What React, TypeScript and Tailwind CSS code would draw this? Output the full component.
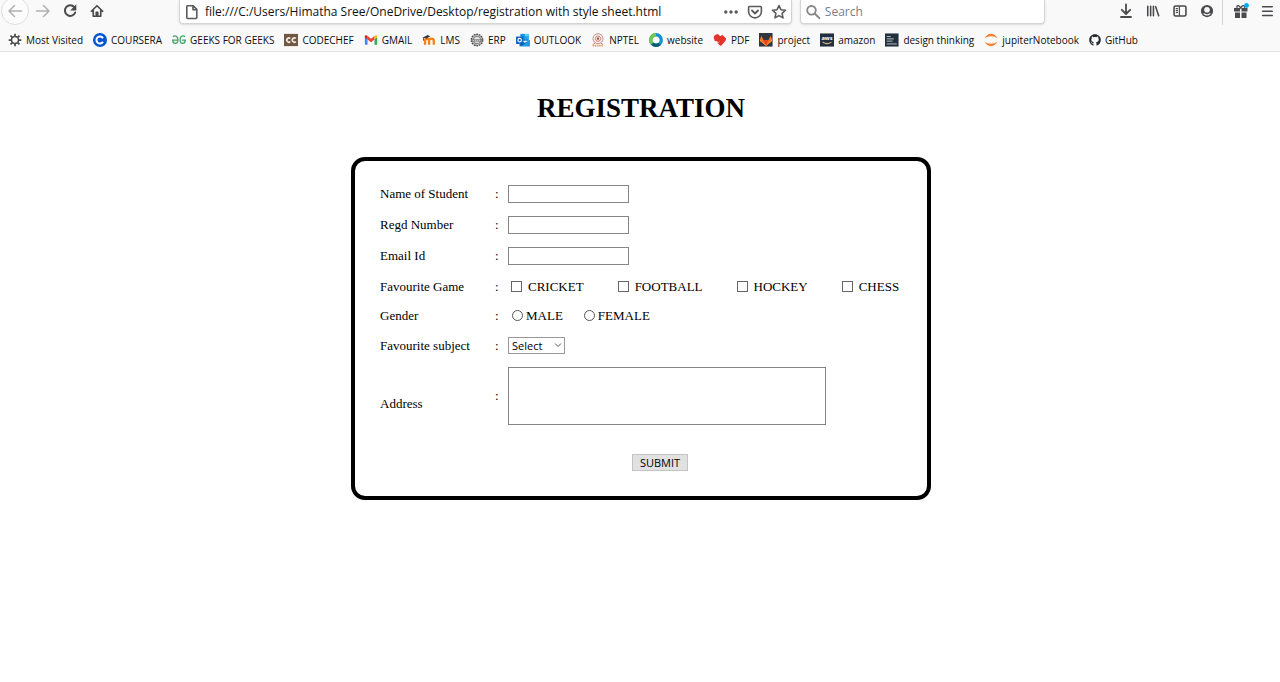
import type { ReactNode } from "react";
import { FaGithub } from "react-icons/fa";

const line = {
  fill: "none",
  stroke: "currentColor",
  strokeWidth: 1.8,
  strokeLinecap: "round" as const,
  strokeLinejoin: "round" as const,
};

function Glyph({ children, size = "size-4" }: { children: ReactNode; size?: string }) {
  return (
    <svg viewBox="0 0 16 16" className={`${size} shrink-0`} aria-hidden="true">
      {children}
    </svg>
  );
}

function ToolButton({ label, className = "w-[27px]", children }: { label: string; className?: string; children: ReactNode }) {
  return (
    <button type="button" aria-label={label} className={`flex shrink-0 items-center justify-center ${className}`}>
      {children}
    </button>
  );
}

function NavButtons() {
  return (
    <div className="flex w-[179px] shrink-0 items-center pl-px text-[#4a4a4c]">
      <button
        type="button"
        aria-label="Back"
        className="flex size-7 shrink-0 items-center justify-center rounded-full border border-[#dededf] bg-[#fcfcfc] text-[#b0b0b2]"
      >
        <Glyph>
          <path {...line} strokeWidth={1.5} d="M14.5 8H2M7.5 2.5 2 8l5.500 5.500" />
        </Glyph>
      </button>
      <ToolButton label="Forward" className="w-[27px] text-[#b0b0b2]">
        <Glyph>
          <path {...line} strokeWidth={1.5} d="M1.500 8H14M8.500 2.500 14 8l-5.500 5.500" />
        </Glyph>
      </ToolButton>
      <ToolButton label="Reload">
        <Glyph>
          <path {...line} strokeWidth={2} d="M12.300 4.200A5.300 5.300 0 1 0 13.200 9.500" />
          <path fill="currentColor" d="M14.300 1.200v5.600a.6.6 0 0 1-.6.6H8.200z" />
        </Glyph>
      </ToolButton>
      <ToolButton label="Home">
        <Glyph size="size-3.5">
          <path {...line} strokeWidth={1.900} d="M1.500 8.300 8 2l6.500 6.300M3.700 7.500V14h8.600V7.500" />
          <path fill="currentColor" d="M6.200 14V9.600a1 1 0 0 1 1-1h1.600a1 1 0 0 1 1 1V14z" />
        </Glyph>
      </ToolButton>
    </div>
  );
}

function AddressBar() {
  return (
    <div className="flex h-6 min-w-0 items-center gap-[5px] rounded-b-sm border border-t-0 border-[#d4d4d6] bg-white px-1 text-[#5a5a5c] shadow-sm">
      <Glyph>
        <path {...line} strokeWidth={1.600} d="M3.500 1.800h5.700l3.600 3.600v8.200a.9.9 0 0 1-.9.900H3.700a.9.900 0 0 1-.9-.9V2.600a.8.8 0 0 1 .7-.8zM9 2v3.700h3.700" />
      </Glyph>
      <input
        type="text"
        aria-label="Address"
        defaultValue="file:///C:/Users/Himatha Sree/OneDrive/Desktop/registration with style sheet.html"
        className="min-w-0 flex-1 bg-transparent text-xs text-[#111] outline-none"
      />
      <div className="flex shrink-0 items-center gap-2">
        <button type="button" aria-label="Page actions">
          <Glyph>
            <circle cx="2.800" cy="8" r="1.700" fill="currentColor" />
            <circle cx="8" cy="8" r="1.700" fill="currentColor" />
            <circle cx="13.200" cy="8" r="1.700" fill="currentColor" />
          </Glyph>
        </button>
        <button type="button" aria-label="Save to Pocket">
          <Glyph>
            <path {...line} strokeWidth={1.600} d="M2.600 2.500h10.800a1 1 0 0 1 1 1v4a6.400 6.400 0 0 1-12.800 0v-4a1 1 0 0 1 1-1z" />
            <path {...line} d="M5 6.500l3 3 3-3" />
          </Glyph>
        </button>
        <button type="button" aria-label="Bookmark this page">
          <Glyph>
            <path {...line} strokeWidth={1.600} d="M8 1.500l1.900 4.200 4.600.5-3.400 3.100.9 4.600L8 11.600l-4 2.300.9-4.600L1.500 6.200l4.600-.5z" />
          </Glyph>
        </button>
      </div>
    </div>
  );
}

function SearchBar() {
  return (
    <div className="flex h-6 min-w-0 items-center gap-1 rounded-b-sm border border-t-0 border-[#d4d4d6] bg-white px-1 text-[#858588] shadow-sm">
      <Glyph>
        <circle {...line} cx="6.500" cy="6.300" r="4.300" />
        <path {...line} strokeWidth={2} d="M9.800 9.600l4.500 4.500" />
      </Glyph>
      <input
        type="search"
        aria-label="Search"
        placeholder="Search"
        className="min-w-0 flex-1 bg-transparent text-xs outline-none placeholder:text-[#7a7d8c]"
      />
    </div>
  );
}

function Tools() {
  return (
    <div className="flex w-[235px] shrink-0 items-center justify-end text-[#4a4a4c]">
      <ToolButton label="Downloads">
        <Glyph>
          <path {...line} d="M8 1.500v9M3.800 6.800 8 11l4.200-4.200M3 14h10" />
        </Glyph>
      </ToolButton>
      <ToolButton label="Library">
        <Glyph size="size-3.5">
          <path {...line} d="M2 2.500v11M5.300 2.500v11M8.500 2.500v11M11 3l3.500 10.500" />
        </Glyph>
      </ToolButton>
      <ToolButton label="Sidebars">
        <Glyph size="size-3.5">
          <rect {...line} x="1.200" y="2.200" width="13.600" height="11.600" rx="1.800" />
          <path {...line} strokeWidth={1.300} d="M7.300 3v10M3.700 5.300h1.500M3.700 7.500h1.500M3.700 9.700h1.500" />
        </Glyph>
      </ToolButton>
      <ToolButton label="Account">
        <Glyph size="size-3.5">
          <circle cx="8" cy="8" r="7" fill="currentColor" />
          <circle cx="8" cy="6.600" r="3.200" fill="#f9f9fa" />
          <path d="M4.200 10.800q3.800 3.200 7.600 0" fill="none" stroke="#f9f9fa" strokeWidth="1.300" />
        </Glyph>
      </ToolButton>
      <ToolButton label="What's new" className="ml-0.5 h-7 w-[31px] border-l border-[#d4d4d6] pl-1.5">
        <Glyph>
          <path fill="currentColor" d="M1 5h6v3.500H1zM8.500 5h6v3.500h-6zM2 9.500h5V15H2zM8.500 9.500h5V15h-5z" />
          <path {...line} strokeWidth={1.400} d="M7.500 5C6.500 1.800 3.500 2 4 4.300M8 5c.8-3 3.500-3 3.500-.8" />
          <circle cx="13.500" cy="2.500" r="2.400" fill="#00a8f5" />
        </Glyph>
      </ToolButton>
      <ToolButton label="Menu">
        <Glyph size="size-3.5">
          <path {...line} d="M3 3.200h11M3 8.200h11M3 13.200h11" />
        </Glyph>
      </ToolButton>
    </div>
  );
}

const bookmarks: { name: string; icon: ReactNode }[] = [
  {
    name: "Most Visited",
    icon: (
      <Glyph size="size-3.5">
        <circle cx="8" cy="8" r="4" fill="none" stroke="#4a4a4c" strokeWidth="1.800" />
        <path
          stroke="#4a4a4c"
          strokeWidth="2"
          d="M8 .8v3M8 12.200v3M.8 8h3M12.200 8h3M2.900 2.900 5 5M11 11l2.100 2.100M13.100 2.900 11 5M5 11l-2.100 2.100"
        />
      </Glyph>
    ),
  },
  {
    name: "COURSERA",
    icon: (
      <Glyph size="size-3.5">
        <circle cx="8" cy="8" r="8" fill="#0056d2" />
        <path d="M11.400 6A4 4 0 1 0 11.400 10" fill="none" stroke="#fff" strokeWidth="2.300" />
      </Glyph>
    ),
  },
  {
    name: "GEEKS FOR GEEKS",
    icon: (
      <Glyph size="size-3.5">
        <path
          d="M1.200 4.500C2.800 2.300 6.800 3 6.800 7.800c0 5.500-5.600 5.300-6 .4h6M14.800 4.500C13.200 2.300 9.200 3 9.200 7.800c0 5.500 5.600 5.300 6 .4h-4"
          fill="none"
          stroke="#3fa56a"
          strokeWidth="1.500"
        />
      </Glyph>
    ),
  },
  {
    name: "CODECHEF",
    icon: (
      <Glyph size="size-3.5">
        <path fill="#705844" d="M0 1h16v14H0z" />
        <path d="M7.200 6.300A2.400 2.400 0 1 0 7.200 9.900M13.500 6.300A2.400 2.400 0 1 0 13.500 9.900" fill="none" stroke="#f3ece4" strokeWidth="1.800" />
      </Glyph>
    ),
  },
  {
    name: "GMAIL",
    icon: (
      <Glyph size="size-3.5">
        <path fill="#4285f4" d="M1 4.500 4 7v6.500H2a1 1 0 0 1-1-1z" />
        <path fill="#34a853" d="M12 7l3-2.500v8a1 1 0 0 1-1 1h-2z" />
        <path fill="#ea4335" d="M4 3.500l4 3.200 4-3.200V7.300L8 10.500 4 7.300z" />
        <path fill="#c5221f" d="M1 4c0-1.500 1.700-2 3-.5v3.800L1 5z" />
        <path fill="#fbbc04" d="M15 4c0-1.500-1.700-2-3-.5v3.800L15 5z" />
      </Glyph>
    ),
  },
  {
    name: "LMS",
    icon: (
      <Glyph size="size-3.5">
        <path d="M3.500 13.500V9a2.300 2.300 0 0 1 4.600 0v4.500M8.100 9a2.700 2.700 0 0 1 5.400 0v4.500" fill="none" stroke="#f98012" strokeWidth="2.600" />
        <path fill="#3a3a3c" d="M.5 5.500 6.500 2.300l3 1.300-4 2.600z" />
        <path d="M1.800 5.500v3.300" stroke="#3a3a3c" strokeWidth="1" />
      </Glyph>
    ),
  },
  {
    name: "ERP",
    icon: (
      <Glyph size="size-3.5">
        <circle cx="8" cy="8" r="6.500" fill="#c9c9c9" stroke="#4a4a4a" strokeWidth="1.600" strokeDasharray="2 .9" />
        <circle cx="8" cy="8" r="4.300" fill="#e5e5e5" stroke="#666" strokeWidth="1" />
        <path fill="#777" d="M1.500 7.200h13v2.600h-13z" />
        <path stroke="#ddd" strokeWidth="1" d="M3 8.500h10" strokeDasharray="1.500 .8" />
      </Glyph>
    ),
  },
  {
    name: "OUTLOOK",
    icon: (
      <Glyph size="size-3.5">
        <path fill="#1490df" d="M5 1h9.500v8H5z" />
        <path fill="#28a8ea" d="M10 3.500h4.500V7H10z" />
        <path fill="#50d9ff" d="M10 1h4.500v2.500H10z" />
        <path fill="#0a64b4" d="M4 8l6 3 6-3v6.200a1 1 0 0 1-1 1H5a1 1 0 0 1-1-1z" />
        <path fill="#1e9de7" d="M16 8v6.200a1 1 0 0 1-1 1H6z" />
        <rect x="0" y="4" width="8.500" height="8.500" rx=".8" fill="#0a66c2" />
        <circle cx="4.200" cy="8.200" r="2" fill="none" stroke="#fff" strokeWidth="1.300" />
      </Glyph>
    ),
  },
  {
    name: "NPTEL",
    icon: (
      <Glyph size="size-3.5">
        <circle cx="8" cy="6.500" r="5.700" fill="#fbeeea" stroke="#c08d86" strokeWidth="1.100" />
        <circle cx="8" cy="6.500" r="3" fill="none" stroke="#d17a70" strokeWidth="1.100" />
        <circle cx="8" cy="6.500" r="1.300" fill="#a83a35" />
        <path d="M4.500 11.500l-2.500 2M11.500 11.500l2.500 2" stroke="#b5625a" strokeWidth="1" />
        <path d="M2 14.500h12" stroke="#f0a04b" strokeWidth="2" strokeDasharray="1.800 .6" />
      </Glyph>
    ),
  },
  {
    name: "website",
    icon: (
      <Glyph size="size-3.5">
        <circle cx="8" cy="8" r="6" fill="#fff" stroke="#1593c9" strokeWidth="3.800" />
        <path d="M8 2a6 6 0 0 0-4.200 10.200" fill="none" stroke="#71c64b" strokeWidth="3.800" />
        <path d="M3.800 12.200A6 6 0 0 0 12 12.500" fill="none" stroke="#0b5870" strokeWidth="3.800" />
      </Glyph>
    ),
  },
  {
    name: "PDF",
    icon: (
      <Glyph size="size-3.5">
        <path fill="#e5322d" d="M.8 5.500A4 4 0 0 1 6 1.500l2.300 2.100L10.500 2 15 6.300l-.8 2.900L9 14.800 5.500 12l-.5-2.500-3-.5z" />
        <path d="M5.200 11.500l2-1.300" stroke="#fbe3e2" strokeWidth=".8" />
      </Glyph>
    ),
  },
  {
    name: "project",
    icon: (
      <Glyph size="size-3.5">
        <path fill="#30353e" d="M0 0h15.500v15.500H0z" />
        <path fill="#fca326" d="M1 9l1.500-5.500L5 8h6l2.500-4.500L15 9l-7 5.800z" />
        <path fill="#fc6d26" d="M2.500 3.500 5 8l3 6.800L1.700 8zM13.500 3.500 11 8l-3 6.800L14.300 8z" />
        <path fill="#e24329" d="M5 8h6l-3 6.800z" />
      </Glyph>
    ),
  },
  {
    name: "amazon",
    icon: (
      <Glyph size="size-3.5">
        <path fill="#232f3e" d="M0 .5h16v15H0z" />
        <text x="8" y="8.500" textAnchor="middle" fontSize="6.500" fontWeight="700" fontFamily="Open Sans, sans-serif" fill="#fff">
          aws
        </text>
        <path d="M3 10.300c3 2.200 7 2.200 10 .2" fill="none" stroke="#d9b07a" strokeWidth="1.200" />
      </Glyph>
    ),
  },
  {
    name: "design thinking",
    icon: (
      <Glyph size="size-3.5">
        <path fill="#22303d" d="M0 .5h15.500v15H0z" />
        <path d="M2 4h4.500M2 6.700h8M2 9.300h6.500M2 12.500h11.500" stroke="#b9c1c8" strokeWidth="1.100" />
      </Glyph>
    ),
  },
  {
    name: "jupiterNotebook",
    icon: (
      <Glyph size="size-3.5">
        <path fill="#f58231" d="M.8 6.200C3.300-.8 12.700-.8 15.200 6.200 11.800 2.800 4.200 2.800.8 6.200zM.8 9.800c2.500 7 11.900 7 14.400 0-3.400 3.400-11 3.400-14.400 0z" />
      </Glyph>
    ),
  },
  { name: "GitHub", icon: <FaGithub className="size-3 shrink-0 text-[#24292e]" aria-hidden="true" /> },
];

const games = ["CRICKET", "FOOTBALL", "HOCKEY", "CHESS"];

function Row({ label, htmlFor, height = "h-[31px]", children }: { label: string; htmlFor?: string; height?: string; children: ReactNode }) {
  return (
    <div className={`flex items-center ${height}`}>
      {htmlFor ? (
        <label htmlFor={htmlFor} className="w-[115px] shrink-0">
          {label}
        </label>
      ) : (
        <span className="w-[115px] shrink-0">{label}</span>
      )}
      <span className="w-[13px] shrink-0">:</span>
      {children}
    </div>
  );
}

const textField = "h-[18px] w-[121px] border border-[#858585] bg-white px-1 text-xs";

export default function App() {
  return (
    <div className="min-h-screen bg-white font-['Open_Sans','Noto_Sans',sans-serif] text-black">
      <header className="border-b border-[#e3e3e5] bg-[#f9f9fa]">
        <div className="flex h-6 items-start">
          <div className="flex h-[22px] items-center">
            <NavButtons />
          </div>
          <div className="grid min-w-0 flex-1 grid-cols-[5fr_2fr] gap-2">
            <AddressBar />
            <SearchBar />
          </div>
          <div className="flex h-[22px] items-center">
            <Tools />
          </div>
        </div>
        <nav
          aria-label="Bookmarks"
          className="flex h-[27px] items-center gap-2.5 overflow-hidden pt-1 pl-2 text-[10px] leading-4 whitespace-nowrap"
        >
          {bookmarks.map(({ name, icon }) => (
            <a key={name} href="#" className="flex items-center gap-1 text-[#0c0c0d]">
              {icon}
              {name}
            </a>
          ))}
        </nav>
      </header>

      <main className="flex flex-col items-center pt-10 pl-0.5 font-['Liberation_Serif',serif]">
        <h1 className="text-[27px] leading-8 font-bold">REGISTRATION</h1>
        <form onSubmit={(e) => e.preventDefault()} className="mt-[33px] w-full max-w-[580px] rounded-[14px] border-4 border-black px-[25px] pt-[17px] pb-[25px] text-[13px] leading-[17px]">
          <Row label="Name of Student" htmlFor="student">
            <input id="student" type="text" className={textField} />
          </Row>
          <Row label="Regd Number" htmlFor="regd">
            <input id="regd" type="text" className={textField} />
          </Row>
          <Row label="Email Id" htmlFor="email">
            <input id="email" type="email" className={textField} />
          </Row>
          <Row label="Favourite Game" height="h-[30px]">
            <div className="flex gap-[34px] pl-[3px]">
              {games.map((game) => (
                <label key={game} className="flex items-center gap-1.5">
                  <input type="checkbox" className="size-[11px] appearance-none border border-[#666] bg-white checked:bg-black" />
                  {game}
                </label>
              ))}
            </div>
          </Row>
          <Row label="Gender" height="h-[29px]">
            <div className="flex gap-[21px] pl-1">
              {["MALE", "FEMALE"].map((gender) => (
                <label key={gender} className="flex items-center gap-[3px]">
                  <input type="radio" name="gender" className="size-[11px] appearance-none rounded-full border border-[#555] bg-white checked:bg-black" />
                  {gender}
                </label>
              ))}
            </div>
          </Row>
          <Row label="Favourite subject" htmlFor="subject" height="h-[30px]">
            <div className="grid items-center">
              <select
                id="subject"
                className="col-start-1 row-start-1 h-[17px] w-[57px] appearance-none border border-[#999] bg-white pl-[3px] font-['Open_Sans','Noto_Sans',sans-serif] text-[11px] leading-[15px]"
              >
                <option>Select</option>
              </select>
              <svg viewBox="0 0 8 8" className="pointer-events-none col-start-1 row-start-1 mr-[3px] size-2 justify-self-end" aria-hidden="true">
                <path d="M1 2.500l3 3 3-3" fill="none" stroke="#555" />
              </svg>
            </div>
          </Row>
          <div className="flex h-[71px] items-center">
            <label htmlFor="address" className="w-[115px] shrink-0 pt-4">
              Address
            </label>
            <span className="w-[13px] shrink-0">:</span>
            <textarea id="address" className="h-[58px] w-[318px] resize-none border border-[#858585] bg-white p-1 text-xs" />
          </div>
          <div className="flex justify-center pt-[23px] pl-[38px]">
            <button
              type="submit"
              className="h-[17px] w-14 border border-[#c4c4c4] bg-[#e1e1e1] font-['Open_Sans','Noto_Sans',sans-serif] text-[11px] leading-[15px]"
            >
              SUBMIT
            </button>
          </div>
        </form>
      </main>
    </div>
  );
}
